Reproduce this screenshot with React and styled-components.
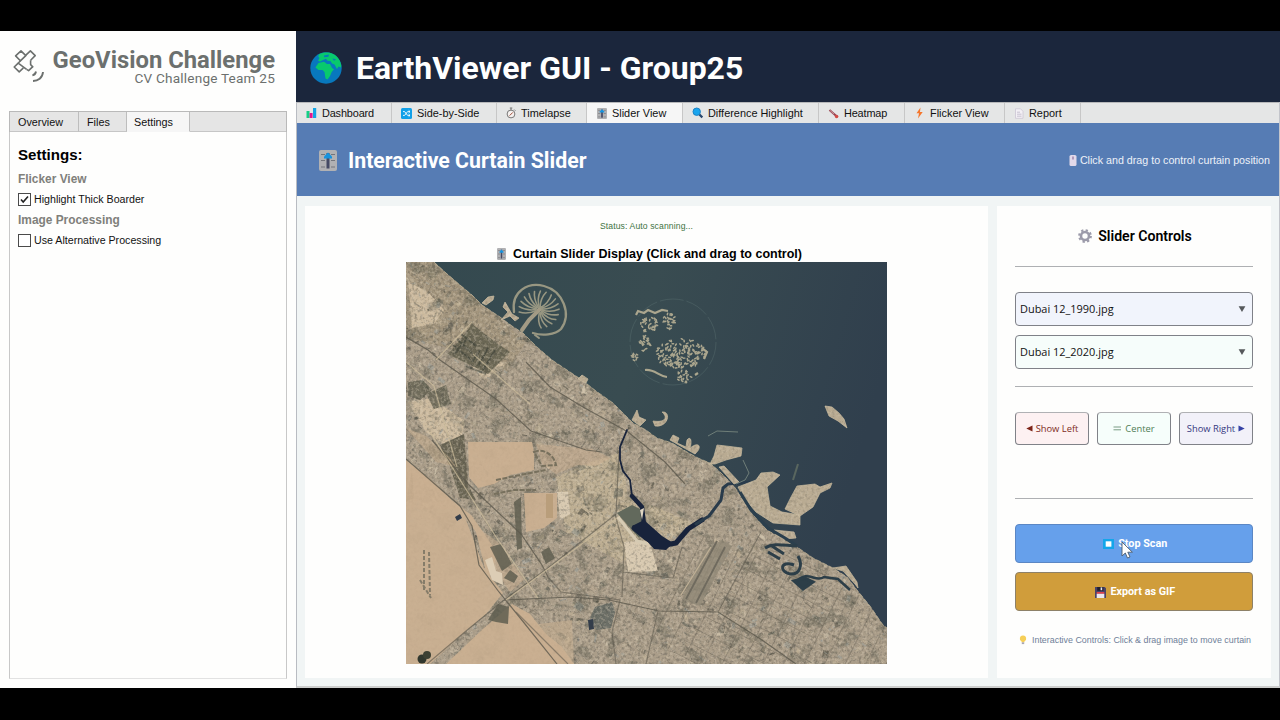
import React from "react";
import styled, { createGlobalStyle } from "styled-components";

const Global = createGlobalStyle`
  * { box-sizing: border-box; }
  body { margin: 0; background: #000; overflow: hidden; }
  svg { display: block; flex: none; }
`;

const UI = `"Liberation Sans", Arial, sans-serif`;
const HEAD = `Roboto, "Liberation Sans", sans-serif`;
const SEGOE = `"Open Sans", "Noto Sans", sans-serif`;

const Screen = styled.div`
  width: 1280px;
  height: 720px;
  padding: 31px 0 32px;
  background: #000;
  font-family: ${UI};
  color: #111;
`;
const Window = styled.div`
  display: flex;
  height: 657px;
  background: #fefefd;
`;
const Sidebar = styled.aside`
  width: 296px;
  flex: none;
  padding: 0 9px 9px;
  display: flex;
  flex-direction: column;
`;
const Brand = styled.div`
  height: 80px;
  padding: 17px 12px 0 2px;
  display: flex;
  justify-content: space-between;
`;
const BrandText = styled.div`
  padding-top: 1px;
  text-align: right;
  color: #6c706e;
  font-family: ${HEAD};
  white-space: nowrap;
`;
const BrandName = styled.div`
  font-size: 23.8px;
  line-height: 22px;
  font-weight: 700;
`;
const BrandTeam = styled.div`
  font-size: 13.6px;
  line-height: 14px;
  letter-spacing: 0.2px;
`;
const SideTabs = styled.div`
  display: flex;
  width: 278px;
  height: 21px;
  border: 1px solid #b9b9b9;
  border-bottom: 0;
  background: #e5e5e5;
`;
const SideTab = styled.div`
  width: ${(p) => p.$w}px;
  padding-left: ${(p) => (p.$active ? 7 : 8)}px;
  font-size: 10.8px;
  line-height: 20px;
  border-right: 1px solid #bdbdbd;
  border-bottom: 1px solid ${(p) => (p.$active ? "#f6f6f6" : "#c6c6c6")};
  background: ${(p) => (p.$active ? "#f6f6f6" : "#e5e5e5")};
`;
const SideTabRest = styled.div`
  flex: 1;
  border-bottom: 1px solid #c6c6c6;
`;
const SidePanel = styled.div`
  flex: 1;
  width: 278px;
  border: 1px solid #c8c8c8;
  border-top: 0;
  border-bottom-color: #e2e2e2;
  padding: 12px 8px;
`;
const SideTitle = styled.div`
  font: bold 15.1px/22px ${UI};
  color: #000;
`;
const SideGroup = styled.div`
  font: bold 11.9px/20px ${UI};
  color: #80807b;
  padding-top: 3px;
`;
const CheckRow = styled.div`
  display: flex;
  align-items: center;
  gap: 3px;
  height: 18px;
  padding-top: 2px;
  font-size: 10.65px;
`;
const Box = styled.span`
  width: 13px;
  height: 13px;
  border: 1px solid #4a4a4a;
  background: #fff;
  display: flex;
  align-items: center;
  justify-content: center;
`;

const Main = styled.main`
  flex: 1;
  display: flex;
  flex-direction: column;
  border-left: 1px solid #b9bcc2;
  border-right: 1px solid #c3c5cb;
  border-bottom: 2px solid #cdcecd;
  background: #f1f5f5;
`;
const TopBar = styled.header`
  height: 71px;
  margin-left: -1px;
  margin-right: -1px;
  padding: 2px 0 0 14px;
  background: #1b263c;
  display: flex;
  align-items: center;
  gap: 14px;
`;
const AppTitle = styled.h1`
  margin: 0;
  font: 700 31.95px/40px ${HEAD};
  color: #fff;
`;
const Tabs = styled.nav`
  display: flex;
  height: 21px;
  border-top: 1px solid #b7b8ba;
  background: #e5e6e6;
`;
const Tab = styled.div`
  width: ${(p) => p.$w}px;
  padding-left: ${(p) => p.$pad || 9}px;
  display: flex;
  align-items: center;
  gap: 5px;
  font-size: 10.9px;
  letter-spacing: ${(p) => p.$ls || 0}px;
  white-space: nowrap;
  border-right: 1px solid #c7c7c7;
  background: ${(p) => (p.$active ? "#f6f6f6" : "#e5e6e6")};
`;
const Banner = styled.section`
  height: 73px;
  background: #567cb4;
  color: #fff;
  padding: 1px 9px 0 22px;
  display: flex;
  align-items: center;
  justify-content: space-between;
`;
const BannerTitle = styled.div`
  display: flex;
  align-items: center;
  gap: 11px;
  padding-top: 1px;
  font: 700 21.3px/28px ${HEAD};
`;
const BannerHint = styled.div`
  display: flex;
  align-items: center;
  gap: 3px;
  font-size: 10.7px;
  color: #edf1f8;
`;
const Body = styled.section`
  flex: 1;
  display: flex;
  gap: 9px;
  padding: 10px 7px 8px 8px;
`;
const Viewer = styled.div`
  width: 683px;
  background: #fefefd;
  display: flex;
  flex-direction: column;
  align-items: center;
`;
const Status = styled.div`
  margin-top: 14px;
  font-size: 8.6px;
  line-height: 13px;
  letter-spacing: 0.12px;
  color: #3d7242;
`;
const ViewerTitle = styled.div`
  margin-top: 13px;
  display: flex;
  align-items: center;
  gap: 7px;
  height: 16px;
  padding-left: 6px;
  font: bold 12.5px/16px ${UI};
  color: #000;
`;
const Controls = styled.div`
  width: 274px;
  padding: 17px 18px 0;
  background: #fefefd;
`;
const ControlsTitle = styled.div`
  display: flex;
  justify-content: center;
  align-items: center;
  gap: 6px;
  height: 26px;
  padding-left: 2px;
  font: 600 14.1px/26px ${HEAD};
  color: #000;
`;
const Rule = styled.div`
  height: 1px;
  margin: ${(p) => p.$top}px 0 ${(p) => p.$bottom}px;
  background: #aeb0b3;
`;
const Select = styled.div`
  height: 34px;
  margin-bottom: 8.5px;
  padding: 0 6px 0 4px;
  display: flex;
  justify-content: space-between;
  align-items: center;
  border: 1px solid #7f8188;
  border-radius: 4px;
  background: ${(p) => p.$bg};
  font: 10.95px/20px ${SEGOE};
  color: #111;
`;
const Snaps = styled.div`
  display: flex;
  gap: 8px;
`;
const Snap = styled.button`
  flex: 1;
  height: 33px;
  padding: 1px 0 0;
  display: flex;
  align-items: center;
  justify-content: center;
  gap: 3px;
  border: 1px solid #808288;
  border-top-color: #b0b1b4;
  border-radius: 4px;
  background: ${(p) => p.$bg};
  color: ${(p) => p.$fg};
  font: 9.35px/16px ${SEGOE};
  white-space: nowrap;
`;
const Action = styled.button`
  position: relative;
  width: 100%;
  height: 39px;
  margin-bottom: 9px;
  padding: 2px 0 0 2px;
  display: flex;
  align-items: center;
  justify-content: center;
  gap: 4.5px;
  border: 1px solid ${(p) => p.$edge};
  border-radius: 4px;
  background: ${(p) => p.$bg};
  color: #fff;
  font: bold 10.8px/16px ${HEAD};
`;
const Pointer = styled.svg`
  position: absolute;
  left: 104px;
  top: 16px;
`;
const Hint = styled.div`
  margin-top: 21px;
  display: flex;
  align-items: center;
  gap: 5px;
  padding-left: 4px;
  height: 17px;
  font-size: 8.9px;
  color: #6f7f99;
  white-space: nowrap;
`;

/* ---------- icons ---------- */
const Satellite = () => (
  <svg width="33" height="34" viewBox="0 0 33 34" fill="none" stroke="#6c706e" strokeWidth="1.6" strokeLinejoin="round">
    <path d="M10 2.9 L4.6 7.9 L9.4 12.8 L14.8 7.6Z" />
    <path d="M14.6 7.4 L19.4 2.9 L24.2 7.6 L19.6 12.2" />
    <path d="M9.4 12.8 L7.2 15.2 L15.6 21.4 M19.6 12.2 L19.6 16.6 L22.2 19.2" />
    <path d="M7.2 15.2 L3.2 19 L8.2 23.8 L12.4 19.8" />
    <path d="M15.6 21.4 L17.6 22.6 L21.8 18.6" />
    <path d="M25 23.5 C24.5 26.2 23.5 27 21.4 27.4 M32 24 C31.5 30 27 33 22 33" strokeWidth="1.9" />
  </svg>
);
const Globe = () => (
  <svg width="32" height="32" viewBox="0 0 32 32">
    <circle cx="16" cy="16" r="15.7" fill="#0878bd" />
    <path fill="#08c96d" d="M9 2.2 C15-.8 24 0 28.4 6.4 C31 10 31.6 14 31 15.5 L28.5 14.5 L27 17 L24.5 12.5 L22 11.5 L20.5 9 L17.5 8.8 L16 6.8 L13 8 L10 9.5 L8 8.5 L9.5 6 L8.2 4.5Z" />
    <path fill="#08c96d" d="M8.5 11 L14 9.8 L17 12 L20 12 L22 16 L24 17.3 L21.7 20 L20 24 L17.5 27.5 L15.5 26.5 L14.5 20 L12.5 18 L8.5 18 L5.4 15.5Z" />
    <path fill="#0878bd" d="M14 3.5 L19 2.6 L18.4 4.8 L14.2 5.3Z M22.5 6.5 L26 7.3 L24 9Z" />
  </svg>
);
const Bars = () => (
  <svg width="11" height="12" viewBox="0 0 11 12">
    <rect x="0.5" y="4" width="3" height="7" fill="#16cf86" /><rect x="3.6" y="6" width="3" height="5" fill="#e3158e" />
    <rect x="7" y="1" width="3.2" height="10" fill="#12a5e6" />
  </svg>
);
const Shuffle = () => (
  <svg width="11" height="11" viewBox="0 0 11 11">
    <rect width="11" height="11" rx="1.5" fill="#12a0e8" />
    <path d="M2 3.6 H3.6 L6.6 7.4 H9 M2 7.4 H3.6 L6.6 3.6 H9 M7.7 2.4 L9 3.6 L7.7 4.8 M7.7 6.2 L9 7.4 L7.7 8.6" stroke="#fff" strokeWidth="0.9" fill="none" />
  </svg>
);
const Watch = () => (
  <svg width="10" height="12" viewBox="0 0 10 12" fill="none" stroke="#777">
    <circle cx="5" cy="7" r="3.9" fill="#f5f1ef" /><path d="M3.8 1 H6.3 M5 1 V3 M8.3 2.6 L9.4 3.7" />
    <path d="M3.6 8.6 L6.8 5.4" stroke="#a04b38" />
  </svg>
);
const SliderIcon = ({ w = 10, h = 11 }) => (
  <svg width={w} height={h} viewBox="0 0 18 21" preserveAspectRatio="none">
    <rect width="18" height="21" rx="2" fill="#b1b1b3" />
    <path d="M2 4.5 H6 M12 4.5 H16 M2 10.5 H6 M12 10.5 H16 M2 17 H6 M12 17 H16" stroke="#74767c" strokeWidth="1.2" />
    <rect x="7.5" y="3" width="3" height="15.5" fill="#454a64" /><path d="M9 2.5 L13 6.5 V8.5 H5 V6.5Z" fill="#1793df" />
  </svg>
);
const Magnifier = () => (
  <svg width="11" height="12" viewBox="0 0 11 12">
    <path d="M7 7 L10.3 10.4" stroke="#29486e" strokeWidth="2.2" /><circle cx="4.7" cy="4.7" r="3.7" fill="#1aa5ee" stroke="#1b83c6" />
  </svg>
);
const Thermo = () => (
  <svg width="11" height="11" viewBox="0 0 11 11">
    <path d="M1.5 2 L8 7.8" stroke="#9a4350" strokeWidth="2" /><path d="M2 2.4 L6 6" stroke="#d9b7b7" strokeWidth="0.7" /><circle cx="8.6" cy="8.5" r="1.8" fill="#d24a45" />
  </svg>
);
const Bolt = () => (
  <svg width="11" height="12" viewBox="0 0 11 12"><path d="M6.5 0.6 L2.5 6.2 H5 L4 11.4 L8.7 5 H6 Z" fill="#f5762c" /></svg>
);
const Page = () => (
  <svg width="10" height="11" viewBox="0 0 10 11">
    <path d="M1.5 .8 H6.5 L9 3.3 V10.3 H1.5Z" fill="#f3f0f5" stroke="#cfc9d6" strokeWidth="0.9" /><path d="M3 4.2 H6 M3 6.2 H7.5 M3 8.2 H7.5" stroke="#bdb8c6" strokeWidth="0.8" />
  </svg>
);
const Mouse = () => (
  <svg width="8" height="11" viewBox="0 0 8 11"><rect x="0.5" width="7" height="11" rx="1.6" fill="#e2d9ea" /><path d="M4 1.5 V4.4" stroke="#8f6f9c" strokeWidth="1.2" /></svg>
);
const Gear = () => (
  <svg width="14" height="14" viewBox="0 0 14 14">
    <circle cx="7" cy="7" r="5.8" fill="none" stroke="#9c9baa" strokeWidth="2.2" strokeDasharray="2.25 2.3" />
    <circle cx="7" cy="7" r="4" fill="none" stroke="#9c9baa" strokeWidth="2.6" />
  </svg>
);
const StopIcon = () => (
  <svg width="11" height="10" viewBox="0 0 11 10"><rect width="11" height="10" fill="#14a6ea" /><rect x="2.7" y="2.3" width="5.7" height="5.4" fill="#fff" /></svg>
);
const Floppy = () => (
  <svg width="11" height="11" viewBox="0 0 11 11">
    <path d="M0 0 H9.7 L11 1.3 V11 H0Z" fill="#494369" /><rect x="2.2" width="6.2" height="3.8" fill="#22202e" /><rect x="5.6" y="0.4" width="1.6" height="2.8" fill="#e9e7ee" />
    <rect x="1.7" y="5" width="7.6" height="1.8" fill="#e0404b" /><rect x="1.7" y="6.8" width="7.6" height="4.2" fill="#ebe8ee" />
  </svg>
);
const Bulb = () => (
  <svg width="8" height="10" viewBox="0 0 8 10"><path d="M4 .5 A3 3 0 0 1 5.5 6.2 V7.2 H2.5 V6.2 A3 3 0 0 1 4 .5Z" fill="#f6cf58" /><rect x="2.8" y="7.3" width="2.4" height="1.8" fill="#a9a6b0" /></svg>
);
const Caret = () => (
  <svg width="8" height="6" viewBox="0 0 8 6"><path d="M.6 .3 H7.4 L4 6Z" fill="#55585b" /></svg>
);
const Triangle = ({ dir, color }) => (
  <svg width="7" height="7" viewBox="0 0 7 7"><path d={dir === "left" ? "M6.5 .5 V6.5 L.3 3.5Z" : "M.5 .5 V6.5 L6.7 3.5Z"} fill={color} /></svg>
);
const Equals = () => (
  <svg width="9" height="5" viewBox="0 0 9 5"><path d="M.5 1 H8 M.5 3.8 H8" stroke="#6b9176" strokeWidth="0.9" /></svg>
);

/* ---------- satellite scene ---------- */
const COAST = "M0 0 H28 L40 11 L54 23 L66 33 L76 43 L94 55 L106 64 L117 71 L131 85 L146 98 L161 108 L176 118 L190 129 L207 141 L217 151 L227 161 L240 168 L251 176 L266 181 L281 190 L292 196 L304 201 L314 210 L327 223 L332 230 L337 238 L348 254 L361 268 L377 277 L391 285 L407 296 L427 306 L441 315 L451 328 L464 344 L477 363 L481 366 V402 H0Z";
const RECLAIMED = [
  "M311 183 L320 184 L336 186 L335 194 L320 198 L309 202 L304 202 L308 194Z",
  "M313 205 L318 204 L333 220 L328 222Z",
  "M332 225 L350 218 L355 211 L367 210 L374 213 L361 225 L364 244 L376 250 L394 253 L394 263 L367 261 L350 250 L338 236Z",
  "M391 224 L409 222 L414 225 L426 221 L424 226 L414 231 L407 245 L394 254 L379 247 L385 235Z",
  "M368 268 L388 270 L390 276 L378 277 L370 273Z",
  "M419 144 L426 145 L433 151 L438 157 L441 166 L432 159 L423 154Z",
  "M76 41 L82 35 L88 34 L87 38 L80 43Z M97 45 L99 40 L106 52 L113 56 L109 59 L104 54 L95 58 L102 50Z",
  "M226 158 L231 148 L233 155 L240 158 L234 164Z M247 159 C260 161 262 155 256 150 C266 149 262 166 249 164Z M176 113 L182 117 L180 121 L172 117Z",
  "M264 178 L267 173 L273 176 L271 181 L280 185 L281 178 C286 172 286 184 283 187 C293 178 297 185 289 192Z",
  "M427 306 L440 304 L451 320 L452 326 L449 322 L437 309Z",
];

const rng = (seed) => () => {
  seed = (seed * 1664525 + 1013904223) % 4294967296;
  return seed / 4294967296;
};
const rand = rng(91);
const pick = (a) => a[Math.floor(rand() * a.length)];
const town = Array.from({ length: 3800 }, () => {
  const w = 1 + rand() * rand() * 9;
  return {
    x: rand() * 481, y: rand() * 402, w, h: 1 + rand() * rand() * 8,
    r: pick([35, 35, -55, 10, 70]), o: 0.2 + rand() * 0.4,
    c: pick(["#45453c", "#66645a", "#807866", "#a0947e", "#c6b699", "#ddd0b6", "#98a09d", "#5c6057"]),
  };
});
const scatter = (n, cx, cy, rx, ry) =>
  Array.from({ length: n }, () => {
    const a = rand() * 6.283, d = Math.sqrt(rand());
    return { x: cx + Math.cos(a) * d * rx, y: cy + Math.sin(a) * d * ry, a: rand() * 180 };
  });
const islands = [...scatter(150, 275, 91, 25, 15), ...scatter(34, 243, 62, 9, 8), ...scatter(24, 263, 59, 7, 8), ...scatter(22, 238, 81, 6, 8), ...scatter(20, 277, 114, 9, 6), ...scatter(10, 229, 94, 4, 5)];
const streets = Array.from({ length: 15 }, (_, i) => i);
const fronds = Array.from({ length: 17 }, (_, i) => {
  const t = ((172 + i * 17) * Math.PI) / 180;
  const m = t + (i < 8 ? -0.25 : 0.25);
  return {
    x0: 133 + Math.cos(t) * 3, y0: 48 + Math.sin(t) * 3,
    mx: 133 + Math.cos(m) * 12, my: 48 + Math.sin(m) * 12,
    x1: 133 + Math.cos(t) * 20, y1: 47.5 + Math.sin(t) * 18.5,
  };
});

const SatelliteImage = () => (
  <svg width="481" height="402" viewBox="0 0 481 402">
    <defs>
      <linearGradient id="sea" x1="0" y1="0" x2="1" y2="0.25">
        <stop offset="0" stopColor="#34494f" /><stop offset="0.5" stopColor="#394c51" /><stop offset="1" stopColor="#303f4d" />
      </linearGradient>
      <clipPath id="land"><path d={COAST} /></clipPath>
      <clipPath id="reclaimed"><path d={RECLAIMED.join(" ")} /></clipPath>
      <clipPath id="frame"><rect width="481" height="402" /></clipPath>
      <filter id="dark" x="0" y="0" width="100%" height="100%" colorInterpolationFilters="sRGB">
        <feTurbulence type="fractalNoise" baseFrequency="0.34" numOctaves="4" seed="4" />
        <feColorMatrix values="0 0 0 0 .27  0 0 0 0 .27  0 0 0 0 .25  4 0 0 0 -1.9" />
      </filter>
      <filter id="light" x="0" y="0" width="100%" height="100%" colorInterpolationFilters="sRGB">
        <feTurbulence type="fractalNoise" baseFrequency="0.34" numOctaves="4" seed="17" />
        <feColorMatrix values="0 0 0 0 .86  0 0 0 0 .81  0 0 0 0 .73  0 4 0 0 -1.8" />
      </filter>
      <filter id="patch" x="0" y="0" width="100%" height="100%" colorInterpolationFilters="sRGB">
        <feTurbulence type="fractalNoise" baseFrequency="0.06" numOctaves="4" seed="8" />
        <feColorMatrix values="0 0 0 0 .3  0 0 0 0 .31  0 0 0 0 .27  7 0 0 0 -3.9" />
      </filter>
    </defs>
    <g clipPath="url(#frame)">
      <rect width="481" height="402" fill="url(#sea)" />
      <g clipPath="url(#land)">
        <rect width="481" height="402" fill="#aa9d89" />
        <path d="M0 0 H28 L120 80 L100 110 L60 90 L0 76Z" fill="#a3957d" />
        <path d="M2 20 L22 30 L38 48 L28 62 L6 66Z M62 100 L86 92 L100 104 L78 118Z M2 140 L26 136 L60 160 L50 190 L20 170Z" fill="#cdbb9f" />
        <path d="M185 200 L215 190 L222 235 L250 245 L290 262 L260 280 L215 300 L160 270 L150 215Z" fill="#bdae92" />
        {town.map((t, i) => (
          <rect key={i} x={t.x} y={t.y} width={t.w} height={t.h} fill={t.c} opacity={t.o} transform={`rotate(${t.r} ${t.x} ${t.y})`} />
        ))}
        <rect width="481" height="402" filter="url(#patch)" opacity="0.34" />
        <path d="M34 183 L58 172 L62 223 L70 238 L54 236 L44 205Z M6 208 L0 240 L8 236Z" fill="#6b6654" />
        <path d="M54 78 L66 62 L92 82 L104 90 L82 112 L66 104 L42 92Z" fill="#6c6855" />
        <path d="M55 72 L70 84 M51 77 L66 91 M47 83 L64 97 M60 78 L48 92 M74 88 L66 100 M82 86 L72 104 M89 88 L77 108 M60 104 L80 112" stroke="#393e35" strokeWidth="2" opacity=".6" />
        <path d="M189 345 L206 340 L209 350 L205 366 L190 368 L184 356Z" fill="#6c6f67" />
        <path d="M2 120 L17 118 L26 128 L14 138 L2 134Z M20 132 L40 123 L45 142 L28 147Z" fill="#5c5c4c" opacity=".75" />
        <path d="M151 230 H162 L164 252 L154 258Z M218 280 L243 278 L252 309 L222 310Z" fill="#d9cab1" />
        <rect width="481" height="402" filter="url(#dark)" opacity="0.27" />
        <rect width="481" height="402" filter="url(#light)" opacity="0.32" />
        <g fill="#ccb192" opacity=".9">
          <path d="M0 198 L30 222 L57 250 L72 290 L78 306 L97 331 L80 352 L52 376 L24 402 H0Z" />
          <path d="M62 180 H126 L128 190 L128 208 L104 213 L88 222 L72 226 L63 215Z" />
          <path d="M118 231 H151 V256 L138 266 L120 270Z M106 342 L124 352 L140 372 L156 385 L168 402 H40 L78 366Z M46 238 L66 254 L92 292 L82 318 L70 270Z" />
          <path d="M130 182 L186 187 L205 196 L190 204 L172 203 L150 212 L136 202Z M66 262 L92 280 L118 318 L104 330 L84 300Z" opacity=".55" />
          <path d="M0 166 L20 174 L44 196 L50 205 L30 200Z M132 362 L166 358 L168 402 H152Z" opacity=".5" />
        </g>
        <path d="M84 285 L95 282 L106 302 L96 309Z M104 308 L112 314 L108 321 L98 316Z M135 290 L143 285 L149 296 L140 302Z M92 342 L103 345 L102 362 L90 360 L82 358Z M108 240 L115 235 L116 286 L111 288Z" fill="#5f5e50" opacity=".85" />
        <path d="M79 298 L86 295 L90 309 L96 311 L97 323 L86 318Z" fill="#dccdb5" />
        <path d="M140 232 H147 V256 H140Z" fill="#b99e7b" />
        <path d="M90 218 L114 213 L140 208 M88 232 L108 228 L130 228 M128 190 C136 186 148 192 150 203 L136 204Z" stroke="#77705d" strokeWidth="2" fill="none" strokeDasharray="5 1.5" />
        <g fill="none" stroke="#5d594d" strokeWidth="1.2" opacity=".8">
          <path d="M0 197 L54 244 L66 264 L73 303 L93 330 L115 357 L151 402" />
          <path d="M0 75 L22 88 L34 98 L90 137 L125 169 L180 188 L196 190" />
          <path d="M26 178 L62 222 L115 272 L136 303 L142 315" />
          <path d="M21 402 L60 369 L98 338 L142 306 L210 252 L213 190" opacity=".8" />
          <path d="M98 338 L165 335 L203 338 L253 349 L312 350 L356 378 L390 402" />
          <path d="M120 100 L144 125 L177 145 L222 170 L259 200 L279 222" />
          <path d="M142 315 L155 330 L214 338 L206 370 L210 402 M252 349 L240 402 M312 350 L355 270 M110 350 L162 402" opacity=".7" />
          <path d="M217 310 L267 316 L276 285 M209 252 L218 285 L216 335" opacity=".7" />
        </g>
        <path d="M0 100 L28 124 L51 205 M24 170 L90 275 L132 336 M100 338 L215 253 M67 92 L124 142 M30 98 L66 60" stroke="#cdbd9c" strokeWidth="1.2" fill="none" opacity=".7" />
        <g stroke="#625d51" strokeWidth=".8" opacity=".45">
          {streets.map((i) => (
            <path key={i} d={`M${300 + i * 17} ${270 + i * 7} l-55 110 M${258 + i * 10} ${402 - i * 12} l90 46`} />
          ))}
        </g>
        <path d="M298 288 L316 278 L326 284 L294 344 L276 338Z" fill="#8f8776" opacity=".75" />
        <path d="M311 279 L280 337 M319 285 L290 341" stroke="#6f6a5e" strokeWidth="1.8" />
        <path d="M305 285 L275 333" stroke="#c0b096" strokeWidth="1.2" />
        <path d="M211 251 L226 243 L236 248 L239 270 L233 276Z" fill="#62695c" />
        <path d="M212 255 L231 279 L241 282" stroke="#d6cbb3" strokeWidth="3" fill="none" />
        <path d="M18 288 V330 M23 290 L24 333 M14 318 L25 336" stroke="#857c69" strokeWidth="2" strokeDasharray="4 2" />
        <path d="M49 255 L54 252 L56 256 L51 259Z M182 358 L187 357 L188 367 L183 368Z" fill="#333d4a" />
        <circle cx="16" cy="397" r="4.5" fill="#31372e" /><circle cx="21" cy="393" r="4" fill="#3c4033" />
      </g>
      <path d={COAST.replace("H28", "M28 0").split("V402")[0]} fill="none" stroke="#c0b294" strokeWidth="1" strokeDasharray="5 2" opacity=".7" />

      <g fill="none" stroke="#18233b" strokeLinecap="round" strokeLinejoin="round">
        <path d="M221 168 L214 185 L214 198 L217 209 L224 218 L226 234" strokeWidth="1.8" />
        <path d="M226 234 L236 245 L238 262 L241 274" strokeWidth="4.4" />
        <path d="M228 266 L240 276 L254 284 L270 281 L282 267 L296 258" strokeWidth="5" />
        <path d="M290 262 L303 254 L315 238 L317 226 L322 222 L343 220" strokeWidth="3" stroke="#293b4b" />
      </g>
      <path d="M226 264 L238 258 L256 274 L267 281 L260 288 L248 287 L240 278Z" fill="#18233b" />
      <path d="M234 248 L238 246 L236 258Z" fill="#dfd5c2" />

      <path d={RECLAIMED.join(" ")} fill="#b9ab92" stroke="#cbbda1" strokeWidth=".7" />
      <g clipPath="url(#reclaimed)">
        <rect width="481" height="402" filter="url(#dark)" opacity="0.16" />
        <rect width="481" height="402" filter="url(#light)" opacity="0.25" />
      </g>
      <path d="M302 174 L311 169 L332 170 M337 198 L343 211 L339 218 L330 222" fill="none" stroke="#6f7e78" strokeWidth="1" />
      <path d="M387 218 L392 202" stroke="#59665f" strokeWidth="2" />
      <path d="M334 230 L345 248 L362 266 L379 276 L391 284" fill="none" stroke="#2b3f4d" strokeWidth="3" />
      <g fill="none" stroke="#2c3e48" strokeWidth="3">
        <path d="M359 286 C368 280 380 284 391 284 M362 290 L374 297 M366 284 L378 292" />
        <path d="M388 303 C374 298 373 310 384 312 C394 313 397 303 392 294" />
        <path d="M390 320 C402 307 409 321 418 315 L432 317 L444 328" strokeWidth="2.5" />
        <path d="M388 319 L399 316 L407 320 L397 327Z" fill="#2c3e48" />
      </g>

      <g fill="none" stroke="#989782" strokeLinecap="round">
        <path d="M108 50 C105 29 122 20 138 24 C157 29 166 52 155 67 C149 73 136 74 127 71" strokeWidth="2.3" />
        <path d="M116 68 L123 58 L135 46" strokeWidth="4" stroke="#a39b85" />
        <g strokeWidth="1.6">
          {fronds.map((f, i) => (
            <path key={i} d={`M${f.x0} ${f.y0} Q${f.mx} ${f.my} ${f.x1} ${f.y1}`} />
          ))}
        </g>
        <path d="M129 73 L133 76" strokeWidth="2" />
      </g>

      <ellipse cx="267" cy="80" rx="43" ry="43" fill="none" stroke="#5d7272" strokeWidth=".8" strokeDasharray="24 3" opacity=".5" />
      <g stroke="#aba68e" strokeWidth="1.5" strokeLinecap="round">
        {islands.map((p, i) => (
          <path key={i} d={`M${p.x} ${p.y} l1.5 .3`} transform={`rotate(${p.a} ${p.x} ${p.y})`} />
        ))}
      </g>
      <path d="M230 53 L232 49 L238 51 L242 48 L249 51 L256 48 L262 49 M239 108 C249 107 252 114 261 115 M289 113 L292 111 M296 86 L301 90 L298 97" stroke="#aba68e" strokeWidth="2.2" fill="none" />
    </g>
  </svg>
);

const TABS = [
  ["Dashboard", 95, Bars, -0.15], ["Side-by-Side", 105, Shuffle, 0], ["Timelapse", 90, Watch, 0], ["Slider View", 96, SliderIcon, 0, 10],
  ["Difference Highlight", 136, Magnifier, 0], ["Heatmap", 86, Thermo, -0.15], ["Flicker View", 100, Bolt, 0], ["Report", 76, Page, 0],
];

export default function App() {
  return (
    <Screen>
      <Global />
      <Window>
        <Sidebar>
          <Brand>
            <Satellite />
            <BrandText>
              <BrandName>GeoVision Challenge</BrandName>
              <BrandTeam>CV Challenge Team 25</BrandTeam>
            </BrandText>
          </Brand>
          <SideTabs>
            <SideTab $w={69}>Overview</SideTab>
            <SideTab $w={48}>Files</SideTab>
            <SideTab $w={63} $active>Settings</SideTab>
            <SideTabRest />
          </SideTabs>
          <SidePanel>
            <SideTitle>Settings:</SideTitle>
            <SideGroup>Flicker View</SideGroup>
            <CheckRow>
              <Box>
                <svg width="9" height="9" viewBox="0 0 9 9"><path d="M1 4.5 L3.2 7 L8 1.5" stroke="#222" strokeWidth="1.6" fill="none" /></svg>
              </Box>
              Highlight Thick Boarder
            </CheckRow>
            <SideGroup>Image Processing</SideGroup>
            <CheckRow><Box />Use Alternative Processing</CheckRow>
          </SidePanel>
        </Sidebar>
        <Main>
          <TopBar><Globe /><AppTitle>EarthViewer GUI - Group25</AppTitle></TopBar>
          <Tabs>
            {TABS.map(([name, w, Icon, ls, pad], i) => (
              <Tab key={name} $w={w} $ls={ls} $pad={pad} $active={i === 3}><Icon />{name}</Tab>
            ))}
          </Tabs>
          <Banner>
            <BannerTitle><SliderIcon w={18} h={21} />Interactive Curtain Slider</BannerTitle>
            <BannerHint><Mouse />Click and drag to control curtain position</BannerHint>
          </Banner>
          <Body>
            <Viewer>
              <Status>Status: Auto scanning...</Status>
              <ViewerTitle><SliderIcon w={9} h={12} />Curtain Slider Display (Click and drag to control)</ViewerTitle>
              <SatelliteImage />
            </Viewer>
            <Controls>
              <ControlsTitle><Gear />Slider Controls</ControlsTitle>
              <Rule $top={17} $bottom={25} />
              <Select $bg="#f1f4fc">Dubai 12_1990.jpg<Caret /></Select>
              <Select $bg="#f6fdfb">Dubai 12_2020.jpg<Caret /></Select>
              <Rule $top={17} $bottom={25} />
              <Snaps>
                <Snap $bg="#fdf1f2" $fg="#7d2c24"><Triangle dir="left" color="#7d2418" />Show Left</Snap>
                <Snap $bg="#f6fefb" $fg="#4f7d55"><Equals />Center</Snap>
                <Snap $bg="#f2f1f9" $fg="#35397f">Show Right<Triangle dir="right" color="#3541a5" /></Snap>
              </Snaps>
              <Rule $top={53} $bottom={25} />
              <Action $bg="#66a0eb" $edge="#5b87c4">
                <StopIcon />Stop Scan
                <Pointer width="14" height="19" viewBox="0 0 14 19">
                  <path d="M2 1 V15 L5.3 12 L7.5 17 L10 16 L7.8 11.2 H12.4Z" fill="#fff" stroke="#4c5b6d" strokeWidth=".9" />
                </Pointer>
              </Action>
              <Action $bg="#d09d3b" $edge="#8d8168"><Floppy />Export as GIF</Action>
              <Hint><Bulb />Interactive Controls: Click &amp; drag image to move curtain</Hint>
            </Controls>
          </Body>
        </Main>
      </Window>
    </Screen>
  );
}
